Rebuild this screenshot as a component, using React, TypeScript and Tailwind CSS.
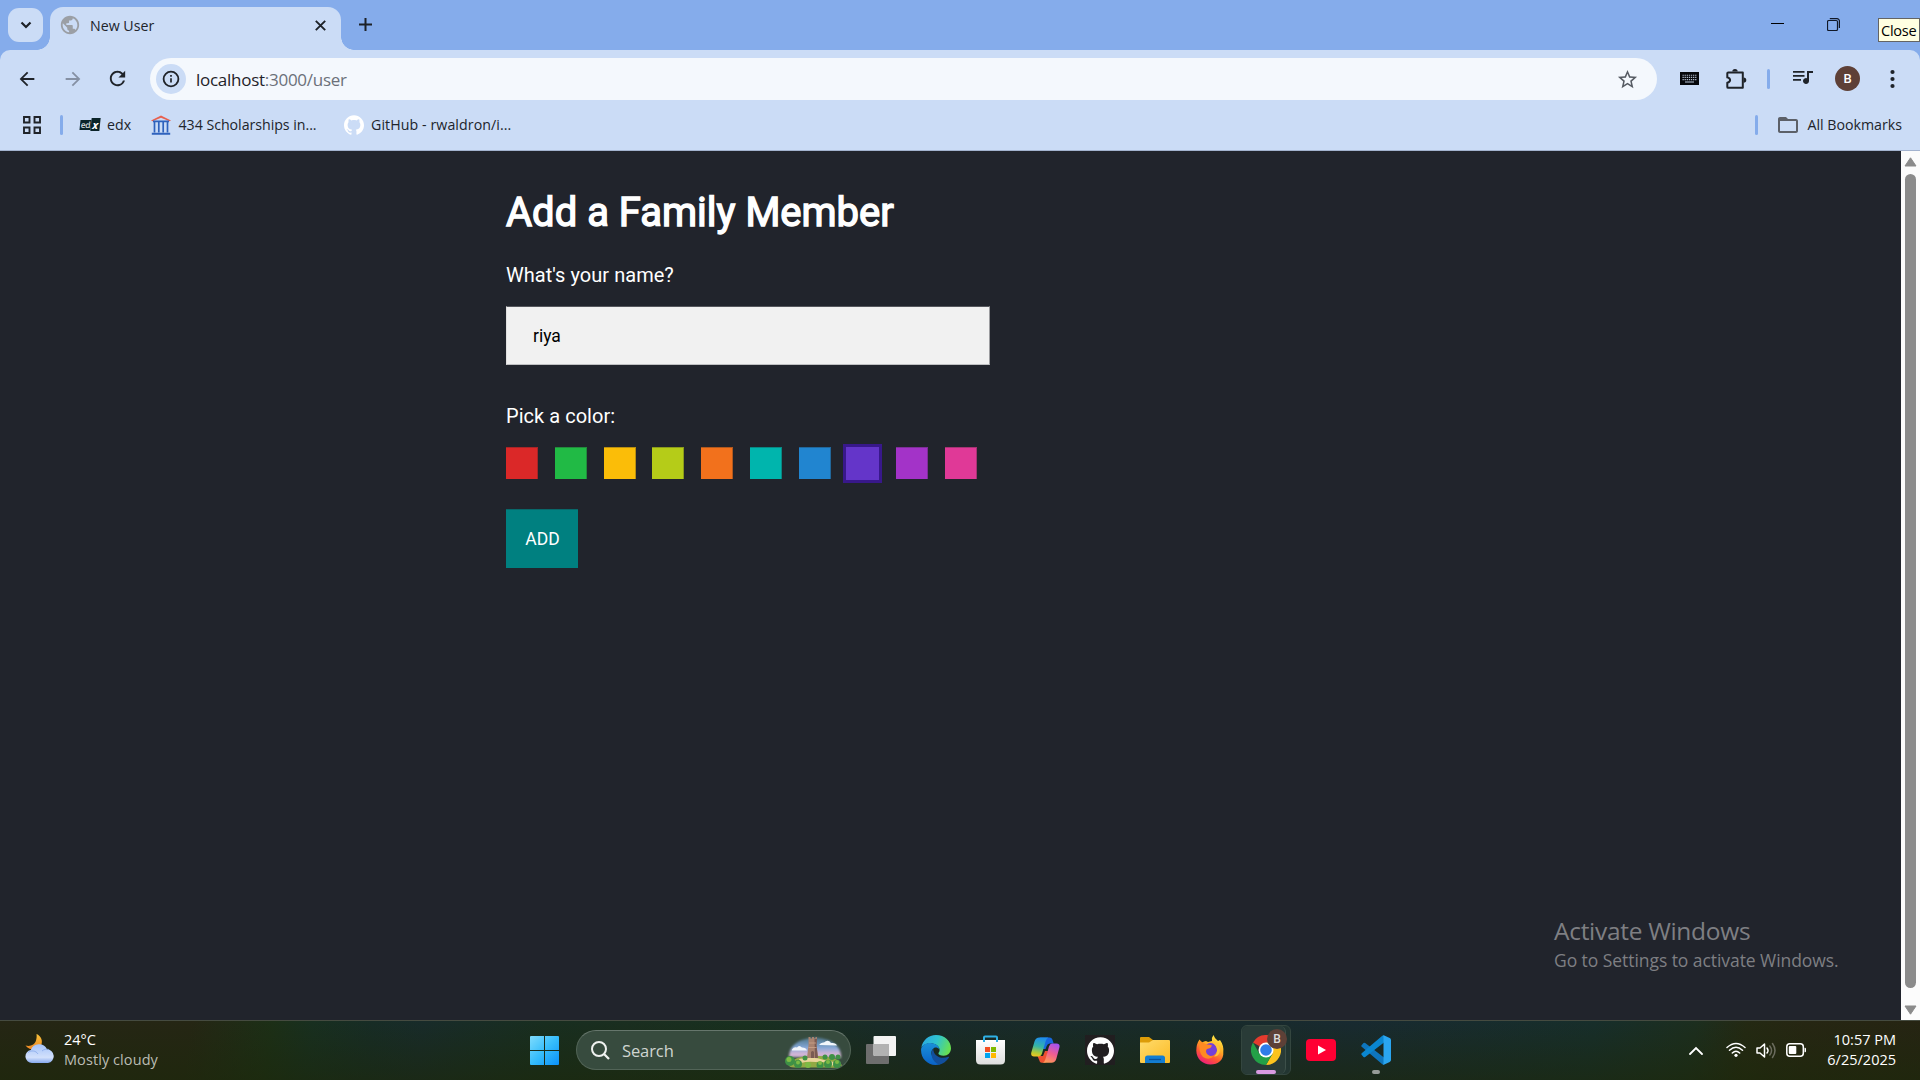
import React from "react";
import { SiGithub } from "react-icons/si";
import {
  MdArrowBack,
  MdArrowForward,
  MdRefresh,
  MdStarOutline,
  MdFolderOpen,
  MdPublic,
} from "react-icons/md";

const UI = "font-['Open_Sans','Noto_Sans',sans-serif]";

function Divider({ className = "" }: { className?: string }) {
  return <div className={`h-5 w-[3px] shrink-0 rounded-full bg-[#85aceb] ${className}`} />;
}

function TitleBar() {
  return (
    <div className="flex h-[50px] bg-[#85aceb]">
      <div className="ml-2 mt-2 flex h-[34px] w-[35px] items-center justify-center rounded-[11px] bg-[#cbdcf6]">
        <svg width="12" height="8" viewBox="0 0 12 8" fill="none" stroke="#1d2127" strokeWidth="2.2">
          <path d="M1.5 1.5 6 6l4.5-4.5" />
        </svg>
      </div>
      <div className="relative ml-[7px] mt-[7px] flex h-[43px] w-[291px] items-center rounded-t-[13px] bg-[#cbdcf6] pb-[7px]">
        <div className="absolute -left-[13px] bottom-0 size-[13px] bg-[radial-gradient(circle_at_0_0,transparent_12.5px,#cbdcf6_13px)]" />
        <div className="absolute -right-[13px] bottom-0 size-[13px] bg-[radial-gradient(circle_at_100%_0,transparent_12.5px,#cbdcf6_13px)]" />
        <MdPublic className="ml-[9px] size-[22px] text-[#9b9fa5]" />
        <span className="ml-[9px] mt-px text-[14.2px] leading-5 text-[#20242b]">New User</span>
        <svg className="ml-auto mr-[15px]" width="11" height="11" viewBox="0 0 11 11" stroke="#1d2127" strokeWidth="1.9">
          <path d="m.8.8 9.4 9.4M10.2.8.8 10.2" />
        </svg>
      </div>
      <svg className="ml-[18px] mt-[18px]" width="13" height="13" viewBox="0 0 13 13" stroke="#1d2127" strokeWidth="2">
        <path d="M6.5 0v13M0 6.5h13" />
      </svg>
      <svg className="ml-auto mt-[23px]" width="13" height="2" viewBox="0 0 13 2">
        <path d="M0 .5h13" stroke="#000" />
      </svg>
      <svg className="ml-[43px] mt-[18px]" width="13" height="13" viewBox="0 0 13 13" fill="none" stroke="#111827">
        <rect x=".5" y="2.5" width="10" height="10" rx="1.3" strokeWidth="1.2" />
        <path d="M2.8.6H10a2.4 2.4 0 0 1 2.4 2.4v7" strokeWidth="1.2" />
      </svg>
      <div className="ml-[38px] mt-[18px] flex h-6 w-[42px] items-center border border-[#646464] bg-[#ffffe1] pl-0.5 text-[14.6px] leading-5 tracking-[-0.3px] text-black">
        Close
      </div>
    </div>
  );
}

function Toolbar() {
  return (
    <div className="bg-[#85aceb]">
      <div className="flex h-[58px] items-center rounded-t-[10px] bg-[#cbdcf6] pb-px text-[#1f2329]">
        <MdArrowBack className="ml-4 size-[22px]" />
        <MdArrowForward className="ml-6 size-[22px] text-[#8590a3]" />
        <MdRefresh className="ml-[22px] size-[23px]" />
        <div className="ml-[21px] mt-px flex h-[42px] w-[1507px] items-center rounded-full bg-[#f4f8fd]">
          <div className="ml-1.5 flex size-[30px] items-center justify-center rounded-full bg-[#cbdcf6]">
            <svg width="18" height="18" viewBox="0 0 18 18" fill="none" stroke="#1f2329">
              <circle cx="9" cy="9" r="7.4" strokeWidth="1.8" />
              <path d="M9 8.2v4.3M9 5v1.8" strokeWidth="1.7" />
            </svg>
          </div>
          <span className="ml-2.5 mt-px text-[17px] leading-6 tracking-[-0.27px] text-[#1f2329]">
            localhost<span className="text-[#6b7079]">:3000/user</span>
          </span>
          <MdStarOutline className="ml-auto mr-[18px] size-[23px] text-[#565b63]" />
        </div>
        <svg className="ml-[23px]" width="19" height="13" viewBox="0 0 19 13">
          <rect width="19" height="13" fill="#05070b" />
          <path
            d="M2.5 3.2h14M2.5 5.4h14M2.5 7.6h14"
            stroke="#aeb9ca"
            strokeWidth="1.1"
            strokeDasharray="1.3 .8"
          />
          <path d="M5 10h9" stroke="#aeb9ca" strokeWidth="1.1" />
        </svg>
        <svg className="ml-[26px]" width="22" height="22" viewBox="0 0 22 22">
          <path
            d="M3.2 4.4h14.6v15.4H3.2c-.5 0-.9-.4-.9-.9v-4.1c1.7-.4 2.8-1.3 2.8-2.7S4 9.800 2.300 9.400V5.300c0-.5.4-.9.9-.9Z"
            fill="none"
            stroke="#1f2329"
            strokeWidth="2"
            strokeLinejoin="round"
          />
          <path d="M7.300 3.600a2.700 2.700 0 0 1 5.400 0ZM18.600 9.400a2.700 2.700 0 0 1 0 5.400Z" fill="#1f2329" />
        </svg>
        <Divider className="ml-5" />
        <svg className="ml-[23px] mb-0.5" width="20" height="15" viewBox="0 0 20 15" fill="#1f2329">
          <path d="M0 1h11.500v1.800H0ZM0 5h11.500v1.800H0ZM0 9h8v1.800H0ZM14 1h6v2h-4v8a3 3 0 1 1-2-2.800Z" />
        </svg>
        <div className="ml-[22px] flex size-[25px] items-center justify-center rounded-full bg-[#5e4037] font-[Roboto] text-[13px] font-medium text-white">
          B
        </div>
        <svg className="ml-[30px]" width="5" height="20" viewBox="0 0 5 20" fill="#1f2329">
          <circle cx="2.500" cy="3" r="2.100" />
          <circle cx="2.500" cy="10" r="2.100" />
          <circle cx="2.500" cy="17" r="2.100" />
        </svg>
      </div>
    </div>
  );
}

function Bookmarks() {
  return (
    <div className="flex h-[43px] items-center border-b border-[#a3b3cf] bg-[#cbdcf6] pb-[9px] text-[14.2px] leading-5 text-[#20242b]">
      <svg className="ml-[23px]" width="18" height="18" viewBox="0 0 18 18" fill="none" stroke="#1f2329" strokeWidth="1.900">
        <path d="M1 1h5.500v5.500H1ZM11.500 1H17v5.500h-5.500ZM1 11.500h5.500V17H1ZM11.500 11.500H17V17h-5.500Z" />
      </svg>
      <Divider className="ml-[19px]" />
      <div className="ml-[17px] flex h-[13px] w-5 items-center">
        <div className="flex h-[10px] w-[11px] -skew-x-6 items-center justify-center bg-[#0b2429] text-[8.500px] font-semibold leading-[10px] tracking-[-0.5px] text-[#d5dbdc]">
          ed
        </div>
        <div className="flex h-[13px] w-[9px] -skew-x-6 items-center justify-center bg-[#0b2429] text-[11px] font-bold italic leading-3 text-white">
          x
        </div>
      </div>
      <span className="ml-[7px] w-6">edx</span>
      <svg className="ml-5" width="20" height="20" viewBox="0 0 20 20">
        <path d="M0 5.500 10 .5l10 5-1.500.8L10 2.800 1.500 6.300Z" fill="#e8604f" />
        <path d="M2 5.500h16v1.700H2ZM.8 17.800h18.400v2H.8Z" fill="#2f62bd" />
        <path d="M3.500 7v10.500M7.800 7v10.500M12.200 7v10.500M16.500 7v10.500" stroke="#2f62bd" strokeWidth="1.700" />
      </svg>
      <span className="ml-[7.500px] w-[139px] whitespace-nowrap tracking-[-0.03px]">434 Scholarships in...</span>
      <SiGithub className="ml-[26px] size-5 text-white" />
      <span className="ml-[7.500px] whitespace-nowrap tracking-[0.08px]">GitHub - rwaldron/i...</span>
      <Divider className="ml-auto" />
      <MdFolderOpen className="ml-[18px] size-[24px] text-[#5c6068]" />
      <span className="ml-[7px] mr-[18px] whitespace-nowrap">All Bookmarks</span>
    </div>
  );
}

const swatches = [
  { fill: "bg-[#db2828]", edge: "border-[#a72527]" },
  { fill: "bg-[#21ba45]", edge: "border-[#228b3c]" },
  { fill: "bg-[#fbbd08]", edge: "border-[#b98e10]" },
  { fill: "bg-[#b5cc18]", edge: "border-[#8a9a1b]" },
  { fill: "bg-[#f2711c]", edge: "border-[#b0581e]" },
  { fill: "bg-[#00b5ad]", edge: "border-[#098883]" },
  { fill: "bg-[#2185d0]", edge: "border-[#21679b]" },
  { fill: "bg-[#6435c9]", edge: "border-[#38188a]", selected: true },
  { fill: "bg-[#a333c8]", edge: "border-[#7d2e98]" },
  { fill: "bg-[#e03997]", edge: "border-[#a53373]" },
];

function Page() {
  return (
    <div className="flex h-[869px] bg-[#21242c]">
      <main className="flex-1 pl-[506px] font-[Roboto,sans-serif] text-white">
        <h1 className="mt-[37px] text-[40px] font-normal leading-[50px] [-webkit-text-stroke:1.4px_white]">
          Add a Family Member
        </h1>
        <p className="mt-[25px] text-[20px] leading-6 tracking-[0.04px]">What's your name?</p>
        <div className="mt-[19px] flex h-[59px] w-[484px] items-center border border-t-[#55575d] border-r-[#9b9c9f] border-b-[#bfc0c2] border-l-[#e0e0e0] bg-[#f1f1f1] pl-[26px] pt-px text-[17.500px] text-black">
          riya
        </div>
        <p className="mt-[39px] text-[20px] leading-6 tracking-[0.04px]">Pick a color:</p>
        <div className="mt-[15px] flex h-10 items-center">
          {swatches.map((s) => (
            <div key={s.fill} className="flex w-[48.800px] shrink-0">
              <div
                className={`${s.fill} ${s.edge} ${
                  s.selected
                    ? "-ml-[5px] h-[39px] w-[39px] border-[3px] border-solid"
                    : "h-8 w-8 border-t border-r"
                } shrink-0`}
              />
            </div>
          ))}
        </div>
        <div className="mt-[26px] flex h-[59px] w-[72px] items-center justify-center border-t border-[#08686a] bg-[#008080] pl-px pt-px text-[17.500px]">
          ADD
        </div>
        <div className={`ml-[1048px] mt-[347px] whitespace-nowrap text-[#7e7f83] ${UI}`}>
          <div className="text-[24.500px] leading-8 tracking-[-0.3px]">Activate Windows</div>
          <div className="text-[17.500px] leading-[26px] tracking-[-0.06px]">Go to Settings to activate Windows.</div>
        </div>
      </main>
      <div className="flex w-[19px] flex-col items-center bg-[#fcfcfc]">
        <svg className="mt-1.5" width="13" height="10" viewBox="0 0 13 10">
          <path d="M6.500.8 12 9H1Z" fill="#8b8b8b" stroke="#8b8b8b" strokeLinejoin="round" />
        </svg>
        <div className="mt-[7px] h-[814px] w-[11px] rounded-full bg-[#8b8b8b]" />
        <svg className="mt-[17px]" width="13" height="10" viewBox="0 0 13 10">
          <path d="M6.500 9.200 12 1H1Z" fill="#8b8b8b" stroke="#8b8b8b" strokeLinejoin="round" />
        </svg>
      </div>
    </div>
  );
}

function Weather() {
  return (
    <svg width="30" height="30" viewBox="0 0 30 30">
      <defs>
        <linearGradient id="moon" x2="0" y2="1">
          <stop stopColor="#f8c33a" />
          <stop offset="1" stopColor="#ee8524" />
        </linearGradient>
        <linearGradient id="cloud" x2="0" y2="1">
          <stop stopColor="#a5c4fa" />
          <stop offset=".7" stopColor="#d2e0fb" />
          <stop offset="1" stopColor="#86a9ee" />
        </linearGradient>
      </defs>
      <path d="M11.500 0c4.500 1.800 6.800 7 4.500 11.500C13.500 16.500 6 18 .5 11.500c5 1.500 9.200-1 10.500-5 .7-2.200.8-4.500.5-6.500Z" fill="url(#moon)" />
      <path d="M7 29a6.500 6.500 0 0 1-1.200-12.900A8.800 8.800 0 0 1 22 15.300 6.900 6.900 0 0 1 23 29Z" fill="url(#cloud)" />
      <path d="M3 18.500c3-2.500 8-2 10 1.500M17 17c2-2 5-2 7-1.500" stroke="#88a9e8" strokeWidth=".8" fill="none" />
    </svg>
  );
}

function StartIcon() {
  return (
    <svg className="mt-px" width="29" height="29" viewBox="0 0 29 29">
      <defs>
        <linearGradient id="win" gradientUnits="userSpaceOnUse" x1="0" y1="0" x2="29" y2="29">
          <stop stopColor="#7fdcfd" />
          <stop offset=".5" stopColor="#36bdfb" />
          <stop offset="1" stopColor="#0a91fa" />
        </linearGradient>
      </defs>
      <path d="M1 0h13v14H0V1Q0 0 1 0ZM15 0h13q1 0 1 1v13H15ZM0 15h14v14H1q-1 0-1-1ZM15 15h14v13q0 1-1 1H15Z" fill="url(#win)" />
    </svg>
  );
}

function CastleArt() {
  return (
    <svg width="58" height="32" viewBox="0 0 58 32">
      <defs>
        <linearGradient id="sky" x2="0" y2="1">
          <stop stopColor="#6a9fd0" stopOpacity=".5" />
          <stop offset=".5" stopColor="#87a9d8" />
          <stop offset=".8" stopColor="#d3b5d5" />
        </linearGradient>
        <filter id="soft">
          <feGaussianBlur stdDeviation="1.200" />
        </filter>
      </defs>
      <path d="M4 21Q4 9 17 4q13-5 26 0 14 6 13 18Z" fill="url(#sky)" filter="url(#soft)" />
      <path d="M7 13.500q2-3 5-2 2-3 5 0 4 0 5 3H7ZM34 9q2-3 5-2.500 4-3.500 7 .5 5-.5 6 2.500Z" fill="#f2f6fb" />
      <path d="M3 28Q12 19 27 20.500q14-2 27 4l3 5q-5 3-12 2H9q-5 0-6-3.500Z" fill="#92a944" />
      <path d="M14 23q15-3 25 1 10 2 15 3l-8 3q-5-5-15-4-9-1-15 1Z" fill="#ead59b" />
      <path d="M23.500 1h2v1.500H27V1h2v1.500h1.500V1H32l-.5 8 1.500 13H22L23.500 9Z" fill="#a8826f" />
      <path d="M29.500 3H32l-.5 6 1.500 13h-3ZM26 16q1.700-2 3 0v6h-3Z" fill="#7a5a52" />
      <path d="M24 7h7M23.500 11.500h8" stroke="#cda38c" strokeWidth=".8" />
      <g fill="#3f9146">
        <circle cx="5" cy="25" r="5" />
        <circle cx="13" cy="28" r="4" />
        <circle cx="20" cy="22" r="2.500" />
        <circle cx="40" cy="21" r="2.500" />
        <circle cx="47" cy="21" r="3" />
        <circle cx="53" cy="21" r="2.500" />
        <circle cx="35" cy="29" r="3.500" />
        <circle cx="43" cy="28" r="4" />
        <circle cx="52" cy="28" r="4" />
      </g>
      <g fill="#7dbb45">
        <circle cx="4" cy="23.500" r="2.500" />
        <circle cx="13" cy="26.500" r="2" />
        <circle cx="23" cy="29" r="3" />
        <circle cx="35" cy="27" r="2" />
        <circle cx="43" cy="26" r="2" />
        <circle cx="52" cy="26" r="2" />
      </g>
    </svg>
  );
}

function TaskViewIcon() {
  return (
    <svg width="30" height="28" viewBox="0 0 30 28">
      <rect y="8" width="23" height="20" rx="1" fill="#6e6e6e" />
      <rect x="7.500" width="22.500" height="20" rx="1" fill="#f3f3f3" />
      <path d="M7.500 8H23v12H8.500l-1-1Z" fill="#b2b2b2" />
    </svg>
  );
}

function EdgeIcon() {
  return (
    <svg width="30" height="30" viewBox="0 0 24 24">
      <defs>
        <linearGradient id="e1" x1="0" y1=".2" x2="1" y2=".5">
          <stop stopColor="#2aa6e2" />
          <stop offset=".5" stopColor="#2fc3cf" />
          <stop offset="1" stopColor="#67e052" />
        </linearGradient>
        <linearGradient id="e2" x2="0" y2="1">
          <stop stopColor="#1a90d9" />
          <stop offset="1" stopColor="#0a62c8" />
        </linearGradient>
      </defs>
      <path d="M.2 10.200C1.300 4.200 6 0 12 0c7 0 12 4.900 12 10.600 0 3.600-2.600 6-5.800 6-2.700 0-4.300-1-4.300-2 0-.6 1-1 1-2.700C14.900 8.500 11 6.500 7.500 6.500 3.500 6.500.9 8.600.2 10.200Z" fill="url(#e1)" />
      <path d="M.1 11C.9 8 3.900 6.300 7.300 6.300c4.300 0 7.400 2.400 7.400 5.200-1.200-1.600-3-2-4.300-1.200-2.500 1.500-2.700 5-.9 7.700C11.500 21 16 21.500 19 20.500c-2 2.200-4.500 3.500-7.500 3.500C4.500 23.700-.5 18 .1 11Z" fill="url(#e2)" />
      <path d="M9.800 10.800c-2.200 3-2.400 9.700 4.700 12.900 3.200-.5 6-2.700 7.900-5.700.2-.4-.1-.8-.6-.6-5.900 2.500-12.200-.8-12-6.600Z" fill="#124f9d" />
    </svg>
  );
}

function StoreIcon() {
  return (
    <svg width="29" height="30" viewBox="0 0 29 30">
      <defs>
        <linearGradient id="bag" x2="0" y2="1">
          <stop stopColor="#fff" />
          <stop offset="1" stopColor="#dedede" />
        </linearGradient>
      </defs>
      <path d="M0 5h29v20q0 4.500-4.500 4.500h-20Q0 29.500 0 25Z" fill="url(#bag)" />
      <path d="M8 7V2.500Q8 1.500 9 1.500h11q1 0 1 1V7" fill="none" stroke="#2fb1e6" strokeWidth="2" />
      <path d="M9 12h5v5H9Z" fill="#f25022" />
      <path d="M15 12h5v5h-5Z" fill="#7fba00" />
      <path d="M9 18h5v5H9Z" fill="#00a4ef" />
      <path d="M15 18h5v5h-5Z" fill="#ffb900" />
    </svg>
  );
}

function CopilotIcon() {
  return (
    <svg width="29" height="26" viewBox="0 0 29 26">
      <defs>
        <linearGradient id="c1" x1=".4" y1="0" x2=".2" y2="1">
          <stop stopColor="#1f8fea" />
          <stop offset=".45" stopColor="#35b5a6" />
          <stop offset=".8" stopColor="#b4ca35" />
          <stop offset="1" stopColor="#f3c320" />
        </linearGradient>
        <linearGradient id="c2" x1=".7" y1="0" x2=".3" y2="1">
          <stop stopColor="#a552f0" />
          <stop offset=".5" stopColor="#ee5d92" />
          <stop offset="1" stopColor="#ff9a55" />
        </linearGradient>
      </defs>
      <path d="M9 .5h9.500q2.500 0 3.200 3l1 3h-4q-2.200 0-3 2.500l-1.200 3h-3Z" fill="#1767df" />
      <path d="M6.500 19 9 25q.7 1 2.500.8h3L17 14h-3l-2 5Z" fill="#ee5030" />
      <path d="M8.500.5h9q-2 .5-2.800 3.500L11 16.500Q10 19.500 7.500 19.500H3q-3.500 0-2.700-4L3.500 4.500Q4.700.5 8.500.5Z" fill="url(#c1)" />
      <path d="M21 6.500h4.500q3.800 0 2.900 4l-3 11q-1.200 4.300-5 4.300h-9q2.200-.5 3-3.500L18 9.500q1-3 3-3Z" fill="url(#c2)" />
    </svg>
  );
}

function FolderIcon() {
  return (
    <svg width="30" height="27" viewBox="0 0 30 27">
      <defs>
        <linearGradient id="fold" x2="1" y2="1">
          <stop stopColor="#ffdb6c" />
          <stop offset="1" stopColor="#fbbb25" />
        </linearGradient>
      </defs>
      <path d="M1 0h8l4 3h16v8H0V1Q0 0 1 0Z" fill="#dd9c08" />
      <path d="M0 5.500h9L13 3h16q1 0 1 1v21q0 1-1 1H1q-1 0-1-1Z" fill="url(#fold)" />
      <path d="M5 26v-5q0-2.500 2.500-2.500h15Q25 18.500 25 21v5Z" fill="#137dd2" />
      <path d="M9 22.500h12" stroke="#0b519b" strokeWidth="1.300" />
    </svg>
  );
}

function FirefoxIcon() {
  return (
    <svg width="29" height="30" viewBox="0 0 29 30">
      <defs>
        <linearGradient id="ff" x1=".8" y1="0" x2=".3" y2="1">
          <stop stopColor="#fff04a" />
          <stop offset=".4" stopColor="#ffad25" />
          <stop offset=".7" stopColor="#ff5733" />
          <stop offset="1" stopColor="#ec1a80" />
        </linearGradient>
      </defs>
      <path d="M3.500 4.500 6 7.500Q8 6 10 6l2 1 4-1q-1-3 1.500-6 1 3.500 4.500 6l2-1q4 5.500 3.300 12C28 25 22 29.500 14.500 29.500S.3 24 .3 15.500Q.3 9 3.500 4.500Z" fill="url(#ff)" />
      <circle cx="14.700" cy="14.500" r="6.500" fill="#7540d8" />
      <path d="M3.500 5.500Q7 8 11 9.500q3 0 5 1-1 3-5 3.500Q9 16 11 19q3 3 7 2-5 5-11 1-5-5-3.500-16.500Z" fill="#ff8a22" />
      <path d="M17 8q4 3 4 8 0 3-3 5.500 5 0 6-5.500 0-5-4-8Z" fill="#ffc33a" />
    </svg>
  );
}

function ChromeIcon() {
  return (
    <svg width="30" height="30" viewBox="0 0 48 48">
      <path d="M24 24 3.200 12A24 24 0 0 1 44.800 12H24Z" fill="#e33b2e" />
      <path d="M24 12h20.800A24 24 0 0 1 24 48l10.400-18Z" fill="#fcc31e" />
      <path d="M13.600 30 3.200 12A24 24 0 0 0 24 48l10.400-18Z" fill="#23a047" />
      <circle cx="24" cy="24" r="12" fill="#fff" />
      <circle cx="24" cy="24" r="9.300" fill="#2f7de9" />
    </svg>
  );
}

function CodeIcon() {
  return (
    <svg width="30" height="30" viewBox="0 0 30 30">
      <path d="M.6 10.200 2.500 8q.8-.6 1.700 0L23 22.500V29q-1 .8-2 0L.7 11.800q-.8-.8-.1-1.600Z" fill="#0e75bd" />
      <path d="M.6 19.800 2.500 22q.8.600 1.700 0L23 7.500V1q-1-.8-2 0L.7 18.200q-.8.800-.1 1.600Z" fill="#0a86d0" />
      <path d="M21 .8q1-.8 2.300-.3l5.400 2.600Q30 3.800 30 5v20q0 1.200-1.300 1.900l-5.400 2.600q-1.300.5-2.300-.3 1.500.8 1.500-1.200V2q0-2-1.500-1.200Z" fill="#2aa5f0" />
    </svg>
  );
}

function Taskbar() {
  return (
    <div className="relative flex h-[60px] items-center border-t border-[#454b40] bg-[linear-gradient(180deg,transparent,rgba(28,40,10,0.6)),linear-gradient(98deg,#252614_0px,#252614_190px,#1c2f17_270px,#182f20_310px,#172c26_370px,#182b2a_420px,#182e20_540px,#1a2e20_620px,#183020_740px,#182a2b_900px,#182b2a_1150px,#182a31_1340px,#172e2b_1580px,#1c2e1f_1680px,#242913_1730px,#262613_1790px,#262413_1920px)] pb-px text-white">
      <div className="ml-[25px] flex w-[505px] items-center">
        <div className="mb-0.5">
          <Weather />
        </div>
        <div className="ml-[9px] text-[14.500px] leading-5">
          <div>24°C</div>
          <div className="tracking-[0.080px] text-[#bbbcb4]">Mostly cloudy</div>
        </div>
      </div>
      <StartIcon />
      <div className="ml-[17px] flex h-10 w-[275px] items-center rounded-full border border-[#526457] border-t-[#66766c] bg-[#374b3e] pl-[14px] pr-[7px]">
        <svg width="19" height="19" viewBox="0 0 19 19" fill="none" stroke="#f0f2f0" strokeWidth="2">
          <circle cx="8" cy="8" r="7" />
          <path d="m13 13 5 5" strokeWidth="2.300" />
        </svg>
        <span className="ml-3 mt-px text-[16.500px] leading-6 tracking-[-0.1px] text-[#cfd5d0]">Search</span>
        <div className="ml-auto mt-[3px]">
          <CastleArt />
        </div>
      </div>
      <div className="ml-[15px] flex items-center">
        <TaskViewIcon />
        <div className="ml-[25px]"><EdgeIcon /></div>
        <div className="ml-[25px]"><StoreIcon /></div>
        <div className="ml-[26px]"><CopilotIcon /></div>
        <div className="ml-[25px] flex size-[30px] items-center justify-center bg-[#211e20]">
          <SiGithub className="size-[27px]" />
        </div>
        <div className="ml-[25px]"><FolderIcon /></div>
        <div className="ml-[26px]"><FirefoxIcon /></div>
        <div className="relative ml-[16px] flex h-[50px] w-[50px] items-center rounded-md border border-[#34463f] bg-[#223531]">
          <div className="flex h-full w-[44px] items-center rounded-md border-r border-[#3d504a] bg-[#293b37] pl-[9px]">
            <ChromeIcon />
          </div>
          <div className="absolute right-[3px] top-[3px] flex size-5 items-center justify-center rounded-full bg-[#5d4037] font-[Roboto] text-[12px] font-medium text-[#ddd]">
            B
          </div>
          <div className="absolute bottom-0 left-[14px] h-1 w-5 rounded-full bg-[#d99ae2]" />
        </div>
        <div className="ml-[15px]">
          <svg width="30" height="22" viewBox="0 0 30 22">
            <rect width="30" height="22" rx="4" fill="#ff0033" />
            <path d="m12 6.500 8 4.500-8 4.500Z" fill="#fff" />
          </svg>
        </div>
        <div className="relative ml-[25px]">
          <CodeIcon />
          <div className="absolute -bottom-[9px] left-[11px] h-1 w-2 rounded-full bg-[#969b98]" />
        </div>
      </div>
      <div className="ml-auto mr-6 flex items-center">
        <svg width="14" height="9" viewBox="0 0 14 9" fill="none" stroke="#fff" strokeWidth="1.800" strokeLinecap="round">
          <path d="M1 8 7 2l6 6" />
        </svg>
        <svg className="ml-[23px]" width="20" height="16" viewBox="0 0 20 16" fill="none" stroke="#fff" strokeWidth="1.500" strokeLinecap="round">
          <path d="M1 5.500q9-8 18 0M3.500 8.300q6.500-6 13 0M6.300 11q3.700-3.500 7.400 0" />
          <circle cx="10" cy="13.300" r="1.600" fill="#fff" stroke="none" />
        </svg>
        <svg className="ml-[10px]" width="21" height="17" viewBox="0 0 21 17" fill="none" stroke="#fff" strokeWidth="1.500" strokeLinecap="round" strokeLinejoin="round">
          <path d="M1 6v5h3l4.500 4V2L4 6ZM11 6q2 2.500 0 5" />
          <path d="M13.800 4q3.500 4.500 0 9M16.500 1.500q5 7 0 14" stroke="#6b6c5e" />
        </svg>
        <svg className="ml-[9px]" width="21" height="14" viewBox="0 0 21 14" fill="none" stroke="#fff" strokeWidth="1.500">
          <rect x=".8" y=".8" width="16.500" height="12.400" rx="3" />
          <path d="M18.500 4.800h.5q1 0 1 1v2.400q0 1-1 1h-.5Z" fill="#fff" stroke="none" />
          <rect x="2.800" y="3" width="7.500" height="8" rx="1" fill="#fff" stroke="none" />
        </svg>
        <div className="ml-[19px] w-[70px] whitespace-nowrap text-[14.500px] leading-5">
          <div className="flex justify-end">10:57 PM</div>
          <div className="flex justify-end">6/25/2025</div>
        </div>
      </div>
    </div>
  );
}

export default function App() {
  return (
    <div className={`h-[1080px] w-[1920px] overflow-hidden ${UI}`}>
      <TitleBar />
      <Toolbar />
      <Bookmarks />
      <Page />
      <Taskbar />
    </div>
  );
}
